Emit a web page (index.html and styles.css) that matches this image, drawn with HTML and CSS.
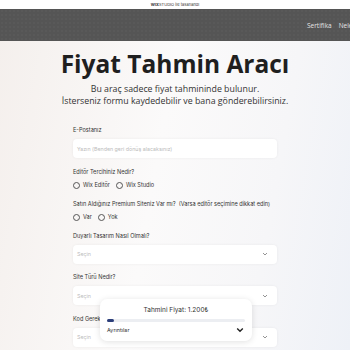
FILE: index.html
```html
<!DOCTYPE html>
<html lang="tr">
<head>
<meta charset="utf-8">
<link rel="stylesheet" href="styles.css">
</head>
<body>
<div class="topstrip"><b>WIX</b>STUDIO ile tasarlandı</div>
<header class="header">
  <nav class="nav"><span>Sertifika</span><span>Neler</span></nav>
</header>
<main class="main">
  <h1 class="title">Fiyat Tahmin Aracı</h1>
  <p class="sub">Bu araç sadece fiyat tahmininde bulunur.<br>İsterseniz formu kaydedebilir ve bana gönderebilirsiniz.</p>
  <form class="form">
    <div class="field">
      <label class="label">E-Postanız</label>
      <div class="input">Yazın (Benden geri dönüş alacaksınız)</div>
    </div>
    <div class="field rfield">
      <label class="label">Editör Tercihiniz Nedir?</label>
      <div class="radios"><span class="radio"><i></i>Wix Editör</span><span class="radio"><i></i>Wix Studio</span></div>
    </div>
    <div class="field rfield">
      <label class="label">Satın Aldığınız Premium Siteniz Var mı?&nbsp; (Varsa editör seçimine dikkat edin)</label>
      <div class="radios"><span class="radio"><i></i>Var</span><span class="radio"><i></i>Yok</span></div>
    </div>
    <div class="field">
      <label class="label">Duyarlı Tasarım Nasıl Olmalı?</label>
      <div class="input select">Seçin<svg width="6" height="4" viewBox="0 0 6 4"><path d="M1 1l2 2 2-2" fill="none" stroke="#888" stroke-width="0.9"/></svg></div>
    </div>
    <div class="field">
      <label class="label">Site Türü Nedir?</label>
      <div class="input select">Seçin<svg width="6" height="4" viewBox="0 0 6 4"><path d="M1 1l2 2 2-2" fill="none" stroke="#888" stroke-width="0.9"/></svg></div>
    </div>
    <div class="field">
      <label class="label">Kod Gerektiren Özel Bölüm Sayısı Kaç?</label>
      <div class="input select">Seçin<svg width="6" height="4" viewBox="0 0 6 4"><path d="M1 1l2 2 2-2" fill="none" stroke="#888" stroke-width="0.9"/></svg></div>
    </div>
  </form>
</main>
<div class="popup">
  <div class="ptitle">Tahmini Fiyat: 1.200₺</div>
  <div class="track"><div class="fill" style="width:5%"></div></div>
  <div class="prow"><span>Ayrıntılar</span><svg width="8" height="6" viewBox="0 0 8 6"><path d="M1.2 1.5l2.8 2.8 2.8-2.8" fill="none" stroke="#222" stroke-width="1.4"/></svg></div>
</div>
</body>
</html>
```
FILE: styles.css
```css
html, body { margin: 0; padding: 0; }
body {
  width: 350px; height: 350px; overflow: hidden; position: relative;
  font-family: Inter, "Liberation Sans", sans-serif;
  background: linear-gradient(100deg, #f4efec 0%, #fbfafa 45%, #f6f6f8 75%, #eef1f7 100%);
}
.topstrip {
  height: 9px; background: #fff; text-align: center;
  font-size: 4px; line-height: 9px; color: #333;
}
.header {
  height: 32px; background: #555555;
  background-image: radial-gradient(rgba(255,255,255,0.08) 0.5px, transparent 0.8px);
  background-size: 4px 4px;
  display: flex; align-items: center; padding-left: 307px; overflow: hidden;
}
.nav { display: flex; gap: 7px; white-space: nowrap; font-family: "Open Sans", sans-serif; font-size: 6.5px; color: #e4e4e4; }
.main { display: flex; flex-direction: column; align-items: center; }
.title {
  margin: 8px 0 0; font-family: "Open Sans", sans-serif; font-weight: 700;
  font-size: 24.5px; line-height: 30px; color: #1f1f1f;
}
.sub {
  margin: 4px 0 0; text-align: center; font-family: "Open Sans", sans-serif;
  font-size: 8.8px; line-height: 12px; color: #333;
}
.form { width: 204px; margin-top: 20px; display: flex; flex-direction: column; gap: 10.5px; }
.field { display: flex; flex-direction: column; gap: 5px; }
.rfield { gap: 6px; margin-bottom: 1.5px; }
.label { font-size: 5.6px; line-height: 7px; color: #333; }
.input {
  height: 19px; box-sizing: border-box; background: #fff; border-radius: 4px;
  box-shadow: 0 0 3px rgba(0,0,0,0.06); padding: 0 9px 0 4px;
  display: flex; align-items: center; justify-content: space-between;
  font-size: 5.3px; color: #bbb;
}
.radios { display: flex; gap: 6px; font-size: 5.6px; line-height: 7px; color: #333; }
.radio { display: flex; align-items: center; gap: 3px; }
.radio i { width: 5px; height: 5px; border: 0.8px solid #555; border-radius: 50%; }
.popup {
  position: absolute; left: 100px; top: 299px; width: 152px; height: 42px; box-sizing: border-box;
  background: #fff; border-radius: 7px; box-shadow: 0 1px 6px rgba(0,0,0,0.12);
  padding: 7px 7px 0;
}
.ptitle { text-align: center; font-size: 6.5px; line-height: 8px; color: #333; }
.track { margin-top: 5px; height: 2.5px; background: #eceef2; border-radius: 2px; }
.fill { height: 100%; background: #2c3e7a; border-radius: 2px; }
.prow { margin-top: 5px; display: flex; justify-content: space-between; align-items: center; font-size: 5.4px; color: #333; padding-right: 1px; }
```
